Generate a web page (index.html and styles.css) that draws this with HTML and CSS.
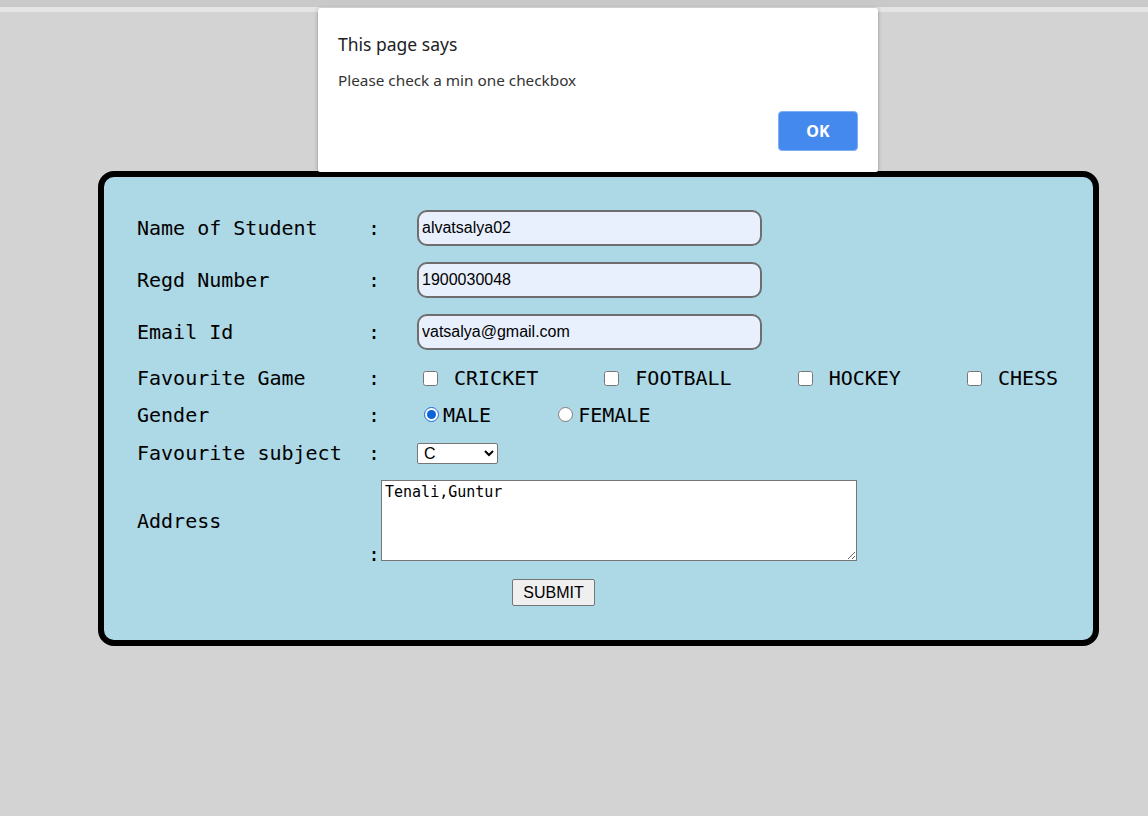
FILE: index.html
```html
<!DOCTYPE html>
<html lang="en">
<head>
<meta charset="utf-8">
<title>Student Form</title>
<link rel="stylesheet" href="styles.css">
</head>
<body>
<div class="topbar"></div>
<div class="topline"></div>

<form class="card">
  <div class="row r1">
    <div class="label">Name of Student</div>
    <div class="colon">:</div>
    <div class="value"><input class="text" type="text" value="alvatsalya02"></div>
  </div>

  <div class="row r2">
    <div class="label">Regd Number</div>
    <div class="colon">:</div>
    <div class="value"><input class="text" type="text" value="1900030048"></div>
  </div>

  <div class="row r3">
    <div class="label">Email Id</div>
    <div class="colon">:</div>
    <div class="value"><input class="text" type="text" value="vatsalya@gmail.com"></div>
  </div>

  <div class="row r4">
    <div class="label">Favourite Game</div>
    <div class="colon">:</div>
    <div class="value">
      <label class="game"><input type="checkbox" class="cb">CRICKET</label>
      <label class="game"><input type="checkbox" class="cb">FOOTBALL</label>
      <label class="game"><input type="checkbox" class="cb">HOCKEY</label>
      <label class="game"><input type="checkbox" class="cb">CHESS</label>
    </div>
  </div>

  <div class="row r5">
    <div class="label">Gender</div>
    <div class="colon">:</div>
    <div class="value">
      <label class="gender"><input type="radio" name="g" class="rb" checked>MALE</label>
      <label class="gender"><input type="radio" name="g" class="rb">FEMALE</label>
    </div>
  </div>

  <div class="row r6">
    <div class="label">Favourite subject</div>
    <div class="colon">:</div>
    <div class="value">
      <select class="subject"><option>C</option><option>C++</option><option>Java</option></select>
    </div>
  </div>

  <div class="row r7">
    <div class="label">Address</div>
    <div class="addr"><span class="colon-inline">:</span><textarea class="area">Tenali,Guntur</textarea></div>
  </div>

  <div class="submit-row"><button type="button" class="submit">SUBMIT</button></div>
</form>

<div class="dialog">
  <div class="dlg-title">This page says</div>
  <div class="dlg-msg">Please check a min one checkbox</div>
  <div class="dlg-actions"><button type="button" class="ok">OK</button></div>
</div>
</body>
</html>
```

FILE: styles.css
```css
html, body {
  margin: 0;
  padding: 0;
}
body {
  background: #d3d3d3;
  width: 1148px;
  height: 816px;
  overflow: hidden;
  position: relative;
}
.topbar {
  height: 7px;
  background: #c9c9ca;
}
.topline {
  height: 5px;
  background: #e5e5e6;
}
.card {
  margin: 159px 0 0 98px;
  width: 1001px;
  height: 475px;
  box-sizing: border-box;
  border: 6px solid #000;
  border-radius: 16px;
  background: #add8e6;
  padding: 33px 0 0 33px;
  display: flex;
  flex-direction: column;
  font-family: "DejaVu Sans Mono", "Liberation Mono", monospace;
  font-size: 20px;
  color: #000;
}
.row {
  display: grid;
  grid-template-columns: 231px 49px 1fr;
  align-items: center;
  height: 24px;
}
.r1 { height: 36px; }
.r2 { height: 36px; margin-top: 16px; }
.r3 { height: 36px; margin-top: 16px; }
.r4 { margin-top: 16px; }
.r5 { margin-top: 13px; }
.r6 { margin-top: 14px; }
.r7 { height: 81px; margin-top: 15px; }

.label {
  white-space: nowrap;
  line-height: 24px;
}
.colon {
  line-height: 24px;
}
.value {
  display: flex;
  align-items: center;
}
.text {
  width: 345px;
  height: 36px;
  box-sizing: border-box;
  border: 2px solid #6e6e6e;
  border-radius: 10px;
  background: #e8f0fe;
  padding: 0 3px;
  font-family: "Liberation Sans", Arial, sans-serif;
  font-size: 16px;
  color: #000;
  outline: none;
}
.game {
  display: flex;
  align-items: center;
  line-height: 24px;
}
.game + .game {
  margin-left: 60px;
}
.cb {
  width: 15px;
  height: 15px;
  margin: 0 16px 0 6px;
}
.gender {
  display: flex;
  align-items: center;
  line-height: 24px;
}
.gender + .gender {
  margin-left: 60px;
}
.rb {
  width: 15px;
  height: 15px;
  margin: 0 4px 2px 7px;
  accent-color: #0b63db;
}
.gender + .gender .rb {
  margin-right: 5px;
}
.subject {
  width: 81px;
  height: 21px;
  box-sizing: border-box;
  font-family: "Liberation Sans", Arial, sans-serif;
  font-size: 16px;
  padding: 0 2px;
  border: 1px solid #767676;
  border-radius: 2px;
  background: #fff;
  color: #000;
}
.addr {
  grid-column: 2 / 4;
  display: flex;
  align-items: flex-end;
  height: 81px;
}
.colon-inline {
  display: inline-block;
  width: 13px;
  line-height: 20px;
  margin-bottom: -3px;
}
.area {
  width: 476px;
  height: 81px;
  box-sizing: border-box;
  margin: 0;
  border: 1px solid #767676;
  padding: 2px 3px;
  font-family: "DejaVu Sans Mono", "Liberation Mono", monospace;
  font-size: 15px;
  line-height: 18px;
  background: #fff;
  color: #000;
  resize: both;
}
.submit-row {
  margin-top: 18px;
  padding-left: 375px;
  display: flex;
  align-items: center;
  height: 27px;
}
.submit {
  width: 83px;
  height: 27px;
  font-family: "Liberation Sans", Arial, sans-serif;
  font-size: 16px;
  background: #efefef;
  border: 1px solid #767676;
  border-radius: 2px;
  padding: 0;
  color: #000;
}

.dialog {
  position: absolute;
  left: 318px;
  top: 8px;
  width: 560px;
  height: 164px;
  box-sizing: border-box;
  background: #fff;
  border-radius: 2px;
  box-shadow: 0 1px 4px rgba(0, 0, 0, 0.28), 0 0 1px rgba(0, 0, 0, 0.2);
  padding: 24px 20px 0 20px;
  font-family: "Noto Sans", "Open Sans", sans-serif;
  color: #202124;
}
.dlg-title {
  font-size: 17.5px;
  line-height: 24px;
  height: 24px;
}
.dlg-msg {
  margin-top: 14px;
  font-size: 15.3px;
  line-height: 20px;
  color: #333;
}
.dlg-actions {
  display: flex;
  justify-content: flex-end;
  margin-top: 21px;
}
.ok {
  width: 80px;
  height: 40px;
  border: 1px solid #7fb0f7;
  border-radius: 4px;
  background: #448aee;
  color: #fff;
  font-family: "Noto Sans", "Open Sans", sans-serif;
  font-weight: bold;
  font-size: 16px;
  padding: 0;
}
```
